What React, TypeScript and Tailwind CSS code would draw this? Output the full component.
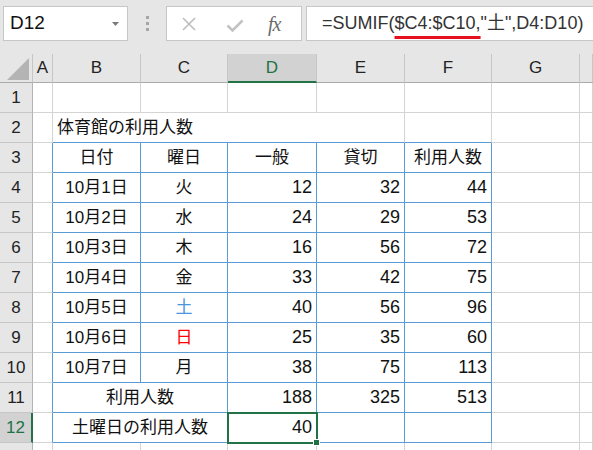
import type React from "react"

type Row = [string, string, number, number, number]

const data: Row[] = [
  ["10月1日", "火", 12, 32, 44],
  ["10月2日", "水", 24, 29, 53],
  ["10月3日", "木", 16, 56, 72],
  ["10月4日", "金", 33, 42, 75],
  ["10月5日", "土", 40, 56, 96],
  ["10月6日", "日", 25, 35, 60],
  ["10月7日", "月", 38, 75, 113],
]

const cols = ["A", "B", "C", "D", "E", "F", "G", ""]

const gridRow = "grid grid-cols-[33px_20px_88px_87px_89px_88px_87px_88px_1fr] h-[30px]"

function Cell({
  children,
  blueR = false,
  blueB = false,
  align = "center",
  className = "",
}: {
  children?: React.ReactNode
  blueR?: boolean
  blueB?: boolean
  align?: "left" | "center" | "right"
  className?: string
}) {
  const r = blueR ? "border-r-[#5b9bd5]" : "border-r-[#d4d4d4]"
  const b = blueB ? "border-b-[#5b9bd5]" : "border-b-[#d4d4d4]"
  const a = align === "left" ? "justify-start pl-[4px]" : align === "right" ? "justify-end pr-[4px]" : "justify-center"
  return (
    <div className={`relative flex items-center whitespace-nowrap border-r border-b ${r} ${b} ${a} ${className}`}>
      {children}
    </div>
  )
}

function RowHead({ n, selected = false }: { n?: number; selected?: boolean }) {
  return selected ? (
    <div className="flex items-center justify-center bg-[#d2d2d2] border-b border-b-[#c6c6c6] border-r-2 border-r-[#217346] text-[#217346]">
      {n}
    </div>
  ) : (
    <div className="flex items-center justify-center bg-[#e6e6e6] border-b border-b-[#c6c6c6] border-r border-r-[#b4b4b4] text-[#222]">
      {n}
    </div>
  )
}

const num = "text-[18px]"

export default function App() {
  return (
    <div className="w-[593px] h-[450px] overflow-hidden bg-white font-['Liberation_Sans','Noto_Sans_CJK_JP',sans-serif] text-[17px] text-[#111]">
      {/* name box + formula bar */}
      <div className="flex items-start h-[54px] bg-[#e6e6e6] pt-[6px]">
        <div className="ml-[3px] w-[125px] h-[35px] bg-white border border-[#c6c6c6] flex items-center pl-[6px] pr-[8px] text-[19px]">
          <span className="flex-1">D12</span>
          <svg width="7" height="4" viewBox="0 0 7 4">
            <path d="M0 0h7L3.5 4z" fill="#7a7a7a" />
          </svg>
        </div>
        <div className="w-[38px] h-[35px] flex flex-col items-center justify-center gap-[3px]">
          <div className="w-[3px] h-[3px] bg-[#a6a6a6]" />
          <div className="w-[3px] h-[3px] bg-[#a6a6a6]" />
          <div className="w-[3px] h-[3px] bg-[#a6a6a6]" />
        </div>
        <div className="w-[136px] h-[35px] bg-white border border-[#c6c6c6] flex items-center">
          <svg className="ml-[14px]" width="16" height="16" viewBox="0 0 16 16">
            <path d="M2 2L14 14M14 2L2 14" stroke="#bdbdbd" strokeWidth="1.6" />
          </svg>
          <svg className="ml-[29px] mt-[4px]" width="18" height="14" viewBox="0 0 18 14">
            <path d="M1.5 6.5L6.5 11.5L16.5 1.5" stroke="#c2c2c2" strokeWidth="2.6" fill="none" />
          </svg>
          <span className="ml-[24px] font-['Liberation_Serif',serif] italic text-[20px] text-[#6b6b6b] tracking-[-1px]">fx</span>
        </div>
        <div className="ml-[4px] flex-1 h-[35px] bg-white border border-r-0 border-[#c6c6c6] flex items-center pl-[15px] text-[18px] text-[#333]">
          <span>
            =SUMIF(
            <span className="underline decoration-[#e8101e] decoration-[3px] underline-offset-[7px]">$C4:$C10,</span>
            "土",D4:D10)
          </span>
        </div>
      </div>

      {/* column headers */}
      <div className="grid grid-cols-[33px_20px_88px_87px_89px_88px_87px_88px_1fr] h-[29px] bg-[#e6e6e6]">
        <div className="relative border-r border-r-[#c6c6c6] border-b border-b-[#ababab]">
          <svg className="absolute left-[7px] top-[4px]" width="22" height="22" viewBox="0 0 22 22">
            <path d="M22 0V22H0z" fill="#b4b4b4" />
          </svg>
        </div>
        {cols.map((c) =>
          c === "D" ? (
            <div key={c} className="flex items-center justify-center bg-[#d2d2d2] border-r border-r-[#c6c6c6] border-b-2 border-b-[#217346] text-[#217346]">
              {c}
            </div>
          ) : (
            <div key={c + "h"} className="flex items-center justify-center border-r border-r-[#c6c6c6] border-b border-b-[#ababab] text-[#222]">
              {c}
            </div>
          ),
        )}
      </div>

      {/* row 1 */}
      <div className={gridRow}>
        <RowHead n={1} />
        <Cell />
        <Cell />
        <Cell />
        <Cell />
        <Cell />
        <Cell />
        <Cell />
        <Cell />
      </div>

      {/* row 2 */}
      <div className={gridRow}>
        <RowHead n={2} />
        <Cell />
        <Cell blueB align="left" className="col-span-4">
          体育館の利用人数
        </Cell>
        <Cell blueB />
        <Cell />
        <Cell />
      </div>

      {/* row 3 */}
      <div className={gridRow}>
        <RowHead n={3} />
        <Cell blueR />
        <Cell blueR blueB>日付</Cell>
        <Cell blueR blueB>曜日</Cell>
        <Cell blueR blueB>一般</Cell>
        <Cell blueR blueB>貸切</Cell>
        <Cell blueR blueB>利用人数</Cell>
        <Cell />
        <Cell />
      </div>

      {data.map(([date, day, a, b, t], i) => (
        <div key={date} className={gridRow}>
          <RowHead n={i + 4} />
          <Cell blueR />
          <Cell blueR blueB>{date}</Cell>
          <Cell blueR blueB className={day === "土" ? "text-[#4a96dc]" : day === "日" ? "text-[#ff0000]" : ""}>
            {day}
          </Cell>
          <Cell blueR blueB align="right" className={num}>{a}</Cell>
          <Cell blueR blueB align="right" className={num}>{b}</Cell>
          <Cell blueR blueB align="right" className={num}>{t}</Cell>
          <Cell />
          <Cell />
        </div>
      ))}

      {/* row 11 */}
      <div className={gridRow}>
        <RowHead n={11} />
        <Cell blueR />
        <Cell blueR blueB className="col-span-2">利用人数</Cell>
        <Cell blueR blueB align="right" className={num}>188</Cell>
        <Cell blueR blueB align="right" className={num}>325</Cell>
        <Cell blueR blueB align="right" className={num}>513</Cell>
        <Cell />
        <Cell />
      </div>

      {/* row 12, D12 selected */}
      <div className={gridRow}>
        <RowHead n={12} selected />
        <Cell blueR />
        <Cell blueR blueB className="col-span-2">土曜日の利用人数</Cell>
        <Cell blueR blueB align="right" className={`${num} z-10`}>
          40
          <div className="absolute -left-[1px] -top-[1px] -right-[2px] -bottom-[2px] border-2 border-[#217346]" />
          <div className="absolute -right-[4px] -bottom-[4px] w-[7px] h-[7px] bg-[#217346] border border-white" />
        </Cell>
        <Cell blueR blueB />
        <Cell blueR blueB />
        <Cell />
        <Cell />
      </div>

      {/* row 13, only its top shows */}
      <div className={gridRow}>
        <RowHead />
        <Cell />
        <Cell />
        <Cell />
        <Cell />
        <Cell />
        <Cell />
        <Cell />
        <Cell />
      </div>
    </div>
  )
}
